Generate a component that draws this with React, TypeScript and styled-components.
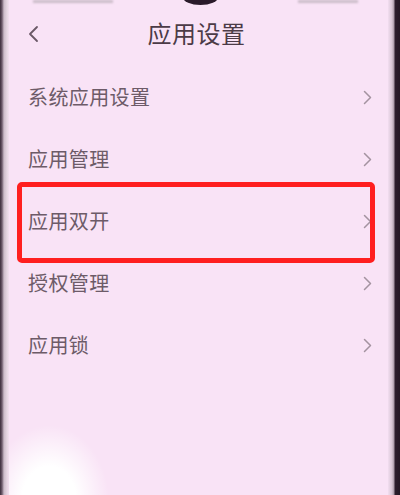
import * as React from 'react';
import styled, { createGlobalStyle } from 'styled-components';

const Global = createGlobalStyle`
  html, body { margin: 0; padding: 0; background: #f9e4f6; }
  body { width: 400px; height: 495px; overflow: hidden; }
`;

const Frame = styled.div`
  width: 400px;
  height: 495px;
  display: flex;
  overflow: hidden;
  font-family: "Noto Sans CJK SC", "Noto Sans", sans-serif;
`;

const LeftBezel = styled.div`
  width: 9px;
  flex-shrink: 0;
  background: linear-gradient(to right, #3b2c3a 0px, #6e5c6c 2px, #cdbdca 4px, #e6d6e2 7px, #f3e0f0 9px);
`;

const RightBezel = styled.div`
  width: 12px;
  flex-shrink: 0;
  background: linear-gradient(to right, #f3def1 0px, #d7c6d4 4px, #a898a6 6px, #2c1e2c 7px, #241824 12px);
`;

const Screen = styled.div`
  flex: 1;
  position: relative;
  display: flex;
  flex-direction: column;
  background:
    radial-gradient(ellipse 60px 75px at 40px 500px, rgba(255, 255, 255, 1) 45%, rgba(255, 255, 255, 0) 100%),
    #f9e3f6;
`;

const Notch = styled.div`
  position: absolute;
  top: -10px;
  left: 174px;
  width: 35px;
  height: 15px;
  border-radius: 50%;
  background: #2a1a2a;
`;

const StatusBar = styled.div`
  height: 6px;
  display: flex;
  justify-content: space-between;
  padding: 0 30px 0 24px;
`;

const Blur = styled.div<{ $w: number }>`
  width: ${(p) => p.$w}px;
  height: 3px;
  background: #cbbcc8;
  filter: blur(1px);
`;

const Header = styled.div`
  height: 60px;
  display: flex;
  align-items: center;
  position: relative;
  justify-content: center;
`;

const Back = styled.div`
  position: absolute;
  left: 18px;
  top: 19px;
  display: flex;
`;

const Title = styled.h1`
  margin: -6px 0 0 -4px;
  font-size: 24px;
  font-weight: 400;
  color: #4c3b47;
  letter-spacing: 0.5px;
  line-height: 1;
`;

const List = styled.div`
  display: flex;
  flex-direction: column;
`;

const Row = styled.div`
  position: relative;
  height: 62px;
  display: flex;
  align-items: center;
  justify-content: space-between;
  padding: 0 16px 0 19px;
`;

const Label = styled.span`
  font-size: 20px;
  color: #6d5b68;
  letter-spacing: 0.4px;
  line-height: 1;
`;

const Highlight = styled.div`
  position: absolute;
  left: 8px;
  right: 13px;
  top: -8px;
  bottom: -11px;
  border: 5px solid #ff1f1f;
  border-radius: 5px;
  pointer-events: none;
`;

const Chevron = ({ color, w, h, sw }: { color: string; w: number; h: number; sw: number }) => (
  <svg width={w} height={h} viewBox={`0 0 ${w} ${h}`} fill="none">
    <path
      d={`M1.5 1.5 L${w - 1.5} ${h / 2} L1.5 ${h - 1.5}`}
      stroke={color}
      strokeWidth={sw}
      strokeLinecap="round"
      strokeLinejoin="round"
    />
  </svg>
);

const BackArrow = () => (
  <svg width="12" height="18" viewBox="0 0 12 18" fill="none">
    <path d="M10 2 L3 9 L10 16" stroke="#6a5866" strokeWidth="1.8" strokeLinecap="round" strokeLinejoin="round" />
  </svg>
);

const items = ['系统应用设置', '应用管理', '应用双开', '授权管理', '应用锁'];

function App() {
  return (
    <>
      <Global />
      <Frame>
        <LeftBezel />
        <Screen>
          <Notch />
          <StatusBar>
            <Blur $w={80} />
            <Blur $w={60} />
          </StatusBar>
          <Header>
            <Back>
              <BackArrow />
            </Back>
            <Title>应用设置</Title>
          </Header>
          <List>
            {items.map((item, i) => (
              <Row key={item}>
                <Label>{item}</Label>
                <Chevron color="#a493a0" w={9} h={15} sw={1.5} />
                {i === 2 && <Highlight />}
              </Row>
            ))}
          </List>
        </Screen>
        <RightBezel />
      </Frame>
    </>
  );
}

export default App;
